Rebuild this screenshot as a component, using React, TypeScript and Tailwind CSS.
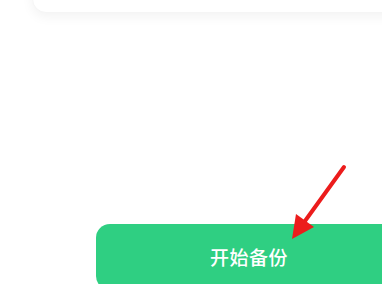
import React from 'react';

export default function App() {
  return (
    <div className="relative w-[382px] h-[284px] overflow-hidden bg-white font-['Noto_Sans_CJK_SC',sans-serif]">
      {/* card cut off at the top */}
      <div className="ml-[32px] mr-[-24px] -mt-[48px] h-[61px] rounded-[14px] bg-white shadow-[0_4px_12px_rgba(0,0,0,0.05)] border border-[#f5f5f5]" />

      <div className="ml-[96px] mt-[211px] w-[306px] h-[66px] rounded-[14px] bg-[#2fcf82] flex items-center justify-center">
        <span className="text-white text-[19px] font-medium tracking-[0.5px]">开始备份</span>
      </div>

      {/* red annotation arrow */}
      <svg className="absolute left-0 top-0 pointer-events-none" width="382" height="284" viewBox="0 0 382 284">
        <line x1="344" y1="167" x2="305" y2="221" stroke="#ec1c1c" strokeWidth="4" strokeLinecap="round" />
        <polygon points="292,239 296,214 314,227" fill="#ec1c1c" />
      </svg>
    </div>
  );
}
